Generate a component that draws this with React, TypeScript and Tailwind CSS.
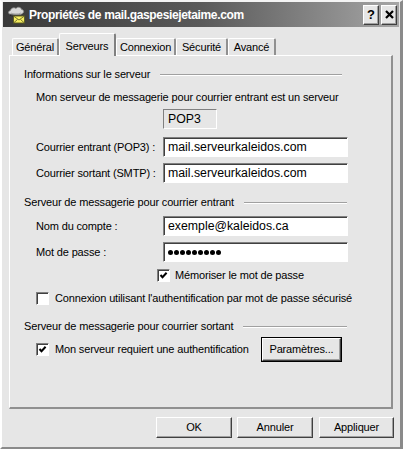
import React from 'react';

const sunken =
  'border border-t-[#808080] border-l-[#808080] border-r-white border-b-white shadow-[inset_1px_1px_0_#404040]';
const raised =
  'border border-t-white border-l-white border-r-[#404040] border-b-[#404040] shadow-[inset_-1px_-1px_0_#a0a0a0]';

function Check({ checked }: { checked?: boolean }) {
  return (
    <div className={`w-[13px] h-[13px] bg-white flex items-center justify-center shrink-0 ${sunken}`}>
      {checked && (
        <svg width="9" height="9" viewBox="0 0 9 9">
          <path d="M1.5 4 L3.5 6.2 L7.6 1.8" fill="none" stroke="#000" strokeWidth="2" />
        </svg>
      )}
    </div>
  );
}

// header text followed by an etched line that runs to a fixed right edge
function GroupTitle({ label, w }: { label: string; w: string }) {
  return (
    <div className={`flex items-center h-[13px] pl-[14px] ${w}`}>
      <span className="shrink-0">{label}</span>
      <div className="ml-[10px] flex-1 h-[2px] border-t border-t-[#a0a0a0] border-b border-b-white" />
    </div>
  );
}

function Field({ label, value, mt }: { label: string; value: React.ReactNode; mt: string }) {
  return (
    <div className={`flex items-center ${mt}`}>
      <span className="w-[153px] pl-[26px] shrink-0">{label}</span>
      <div className={`w-[185px] h-[20px] bg-white flex items-center pl-[4px] text-[12.3px] tracking-normal ${sunken}`}>
        {value}
      </div>
    </div>
  );
}

function Btn({ label, w }: { label: string; w: string }) {
  return (
    <div className={`${w} h-[21px] flex items-center justify-center ${raised}`}>{label}</div>
  );
}

export default function App() {
  const tabs = [
    { name: 'Général', w: 'w-[47px]' },
    { name: 'Serveurs', w: 'w-[57px]', active: true },
    { name: 'Connexion', w: 'w-[60px]' },
    { name: 'Sécurité', w: 'w-[52px]' },
    { name: 'Avancé', w: 'w-[48px]' },
  ];

  return (
    <div className="w-[403px] h-[449px] bg-[#e6e6e6] flex flex-col border-l-2 border-t-2 border-l-white border-t-[#f4f4f4] border-r-[3px] border-b-2 border-r-[#8a8a8a] border-b-[#8a8a8a] font-['Liberation_Sans',Arial,sans-serif] text-[11px] tracking-[-0.15px] text-black overflow-hidden">
      {/* title bar */}
      <div className="mx-[1px] h-[25px] flex items-center bg-gradient-to-r from-[#3a3a3a] via-[#5a5a5a] to-[#a6a6a6] pl-[4px] pr-[2px]">
        <svg width="19" height="19" viewBox="0 0 19 19" className="shrink-0">
          <path
            d="M3 9 C1 9 1 6 3.5 5.5 C4 3 7 2 9 3.5 C10.5 1.5 14 2 14.5 4.5 C17 4.5 17.5 8 15 8.5 L14 9.5 Z"
            fill="#d8d8d8"
            stroke="#8a8a8a"
            strokeWidth="0.8"
          />
          <path d="M4 8 C6 9.5 11 9.5 14 8" fill="none" stroke="#a8a8a8" strokeWidth="1" />
          <path d="M3 10 L6 12" stroke="#202020" strokeWidth="1" strokeDasharray="1 1" />
          <rect x="6.5" y="11" width="11" height="7" fill="#f4ec60" stroke="#5a5a20" strokeWidth="0.9" />
          <path d="M6.5 11 L12 15 L17.5 11 M6.5 18 L10.5 14.5 M17.5 18 L13.5 14.5" fill="none" stroke="#5a5a20" strokeWidth="0.8" />
        </svg>
        <span className="ml-[3px] text-white font-bold text-[12px] tracking-[-0.35px]">
          Propriétés de mail.gaspesiejetaime.com
        </span>
        <div className="ml-auto flex items-center gap-[2px]">
          <div className={`w-[16px] h-[20px] bg-[#e6e6e6] flex items-center justify-center font-bold text-[13px] ${raised}`}>?</div>
          <div className={`w-[16px] h-[20px] bg-[#e6e6e6] flex items-center justify-center ${raised}`}>
            <svg width="9" height="9" viewBox="0 0 9 9">
              <path d="M1 1 L8 8 M8 1 L1 8" stroke="#000" strokeWidth="2.2" />
            </svg>
          </div>
        </div>
      </div>

      {/* tabs */}
      <div className="mt-[6px] h-[22px] pl-[10px] flex items-end relative z-10">
        {tabs.map((t) =>
          t.active ? (
            <div
              key={t.name}
              className={`${t.w} h-[23px] mb-[-1px] bg-[#e6e6e6] border-l border-t border-l-white border-t-white border-r-2 border-r-[#808080] rounded-t-[2px] flex items-start justify-center pt-[4px]`}
            >
              {t.name}
            </div>
          ) : (
            <div
              key={t.name}
              className={`${t.w} h-[17px] border-l border-t border-l-white border-t-white border-r-2 border-r-[#909090] rounded-t-[2px] flex items-center justify-center pt-[1px]`}
            >
              {t.name}
            </div>
          )
        )}
      </div>

      {/* panel */}
      <div className="ml-[7px] w-[384px] h-[354px] border-l border-t border-l-white border-t-white border-r-2 border-b-2 border-r-[#909090] border-b-[#909090] flex flex-col">
        <div className="mt-[12px]">
          <GroupTitle label="Informations sur le serveur" w="w-[332px]" />
        </div>
        <div className="mt-[10px] pl-[26px] h-[13px] flex items-center">
          Mon serveur de messagerie pour courrier entrant est un serveur
        </div>
        <div className="mt-[5px] ml-[153px] w-[54px] h-[20px] flex items-center pl-[4px] text-[12.3px] tracking-normal border border-t-[#808080] border-l-[#808080] border-r-white border-b-white">
          POP3
        </div>
        <Field mt="mt-[8px]" label="Courrier entrant (POP3) :" value="mail.serveurkaleidos.com" />
        <Field mt="mt-[6px]" label="Courrier sortant (SMTP) :" value="mail.serveurkaleidos.com" />

        <div className="mt-[13px]">
          <GroupTitle label="Serveur de messagerie pour courrier entrant" w="w-[337px]" />
        </div>
        <Field mt="mt-[7px]" label="Nom du compte :" value="exemple@kaleidos.ca" />
        <Field
          mt="mt-[6px]"
          label="Mot de passe :"
          value={
            <div className="flex gap-[1px]">
              {Array.from({ length: 9 }).map((_, i) => (
                <div key={i} className="w-[5px] h-[5px] rounded-full bg-black" />
              ))}
            </div>
          }
        />
        <div className="mt-[7px] ml-[147px] flex items-center gap-[5px] h-[13px]">
          <Check checked />
          <span>Mémoriser le mot de passe</span>
        </div>
        <div className="mt-[10px] ml-[26px] flex items-center gap-[6px] h-[13px]">
          <Check />
          <span>Connexion utilisant l'authentification par mot de passe sécurisé</span>
        </div>

        <div className="mt-[15px]">
          <GroupTitle label="Serveur de messagerie pour courrier sortant" w="w-[337px]" />
        </div>
        <div className="mt-[4px] ml-[26px] flex items-center h-[25px]">
          <Check checked />
          <span className="ml-[6px]">Mon serveur requiert une authentification</span>
          <div className="ml-auto mr-[49px] w-[81px] h-[25px] border border-black">
            <div className={`w-full h-full flex items-center justify-center ${raised}`}>Paramètres...</div>
          </div>
        </div>
      </div>

      {/* bottom buttons */}
      <div className="mt-[8px] flex justify-end pr-[6px]">
        <Btn label="OK" w="w-[76px]" />
        <div className="w-[5px]" />
        <Btn label="Annuler" w="w-[76px]" />
        <div className="w-[6px]" />
        <Btn label="Appliquer" w="w-[75px]" />
      </div>
    </div>
  );
}
